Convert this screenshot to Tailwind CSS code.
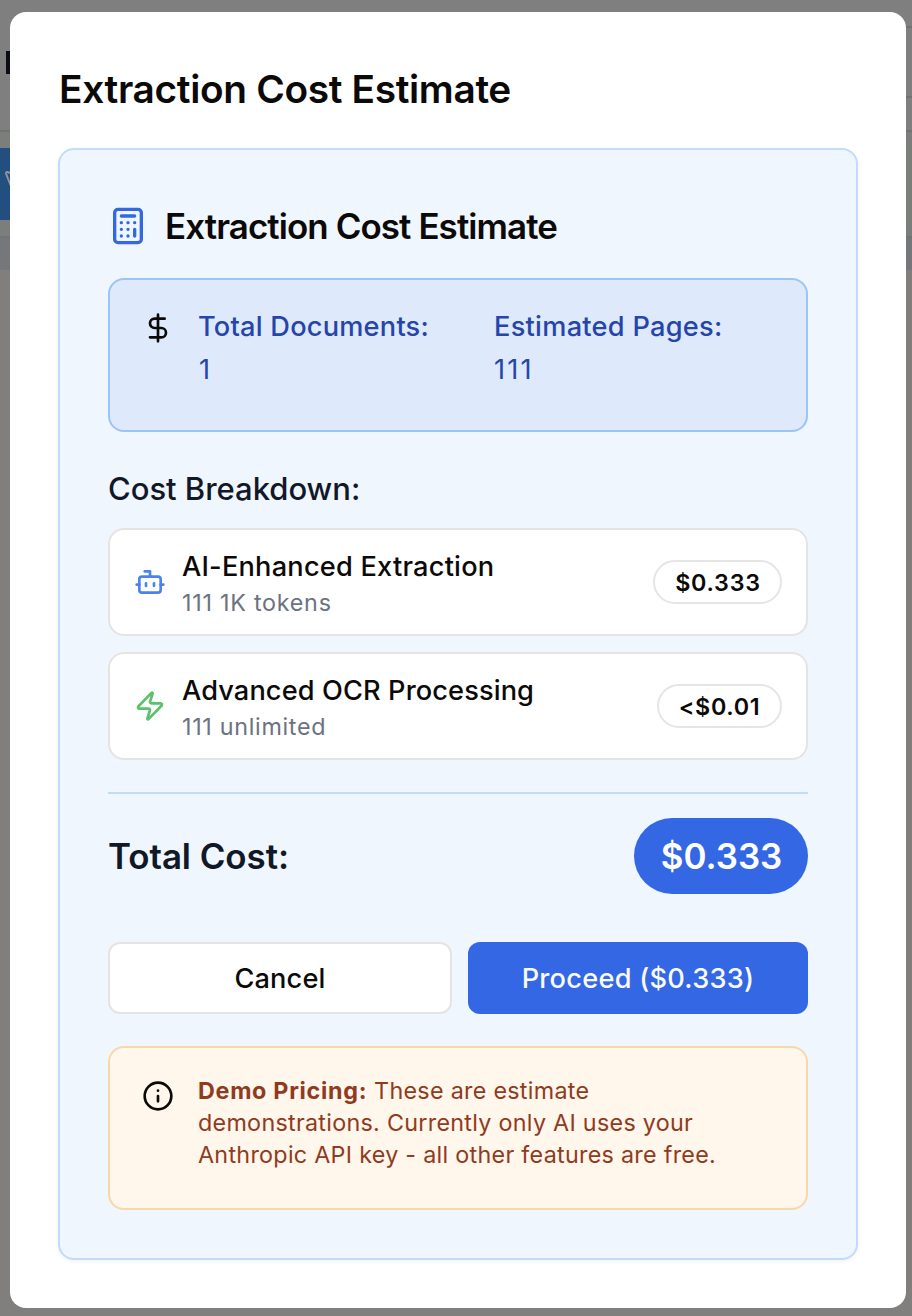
<!DOCTYPE html>
<html lang="en">
<head>
<meta charset="utf-8">
<title>Extraction Cost Estimate</title>
<script src="https://cdn.jsdelivr.net/npm/@tailwindcss/browser@4"></script>
</head>
<body class="relative h-[1316px] w-[912px] overflow-hidden bg-[#7f7f7f] font-['Inter',sans-serif] text-[#0c0a09]">

<!-- Page behind the dialog -->
<div class="flex h-full flex-col" aria-hidden="true">
  <div class="flex h-[132px] border-b-2 border-[#737272]">
    <div class="ml-[6px] mt-[51px] h-[23px] w-1 bg-[#0b0d15]"></div>
    <div class="ml-auto mt-[26px] h-[72px] w-[6px] border-y-2 border-[#737272]"></div>
  </div>
  <div class="h-[106px] border-b-2 border-[#727374] bg-[#7c7e7b] pt-4">
    <div class="h-[72px] w-20 bg-[#234f80] pl-[4px] pt-[22px]">
      <svg class="h-4 w-4" viewBox="0 0 16 16" fill="none" stroke="#929597" stroke-width="2" stroke-linejoin="round"><path d="M6.500 15 2 3.500Q1.700 2 3.500 2L6 3"/></svg>
    </div>
  </div>
  <div class="h-8 bg-[#76777a]"></div>
  <div class="grow bg-[#807f7e]"></div>
</div>

<!-- Dialog -->
<main class="absolute left-[10px] top-3 flex h-[1296px] w-[896px] flex-col rounded-[16px] bg-white p-12">
  <h1 class="h-[56px] pl-px text-[38.8px] font-semibold leading-[58px] tracking-[-0.33px] whitespace-nowrap">Extraction Cost Estimate</h1>

  <section class="mt-8 flex h-[1112px] flex-col rounded-[16px] border-2 border-[#c3dbfb] bg-[#eff6fe] px-12 pt-12 shadow-[0_2px_4px_rgba(0,0,0,0.05)]">
    <div class="flex h-14 items-center gap-4">
      <svg class="size-10 text-[#3367e3]" viewBox="0 0 24 24" fill="none" stroke="currentColor" stroke-width="2" stroke-linecap="round" stroke-linejoin="round"><rect width="16" height="20" x="4" y="2" rx="2"/><path d="M8 6h8M16 14v4M16 10h.01M12 10h.01M8 10h.01M12 14h.01M8 14h.01M12 18h.01M8 18h.01"/></svg>
      <h2 class="pl-px text-[34.9px] font-semibold leading-[56px] tracking-[-0.9px] whitespace-nowrap">Extraction Cost Estimate</h2>
    </div>

    <div class="mt-6 flex h-[154px] rounded-[16px] border-2 border-[#9bc4f9] bg-[#dee9fb] px-8 pt-[25px]">
      <svg class="mt-[7px] size-8 shrink-0" viewBox="0 0 24 24" fill="none" stroke="currentColor" stroke-width="2" stroke-linecap="round" stroke-linejoin="round"><path d="M12 2v20M17 5H9.500a3.500 3.500 0 0 0 0 7h5a3.500 3.500 0 0 1 0 7H6"/></svg>
      <div class="ml-6 grid flex-1 grid-cols-2 content-start gap-4 text-[27.2px] leading-[43px] text-[#2645ab]">
        <div><div class="font-medium tracking-[0.22px] whitespace-nowrap">Total Documents:</div><div class="pl-px">1</div></div>
        <div><div class="font-medium tracking-[0.27px] whitespace-nowrap">Estimated Pages:</div><div class="tracking-[2.2px]">111</div></div>
      </div>
    </div>

    <h3 class="mt-8 h-12 text-[31px] font-medium leading-[50px] tracking-[-0.02px] text-[#111827]">Cost Breakdown:</h3>

    <div class="mt-4 flex flex-col gap-4">
      <div class="flex h-[108px] items-center rounded-[16px] border-2 border-[#e6e4e3] bg-white px-6">
        <svg class="size-8 text-[#4a83f0]" viewBox="0 0 24 24" fill="none" stroke="currentColor" stroke-width="2" stroke-linecap="round" stroke-linejoin="round"><path d="M12 8V4H8"/><rect width="16" height="12" x="4" y="8" rx="2"/><path d="M2 14h2M20 14h2M15 13v2M9 13v2"/></svg>
        <div class="ml-4 whitespace-nowrap pt-px">
          <div class="text-[27.2px] font-medium leading-10 tracking-[0.22px]">AI-Enhanced Extraction</div>
          <div class="text-[23.3px] leading-8 tracking-[0.75px] text-[#6b7280]">111 1K tokens</div>
        </div>
        <div class="ml-auto flex h-11 w-[129px] items-center justify-center rounded-full border-2 border-[#e5e5e5] pl-px pt-0.5 text-[23.3px] font-semibold tracking-[0.75px]">$0.333</div>
      </div>
      <div class="flex h-[108px] items-center rounded-[16px] border-2 border-[#e6e4e3] bg-white px-6">
        <svg class="size-8 text-[#5bc16b]" viewBox="0 0 24 24" fill="none" stroke="currentColor" stroke-width="2" stroke-linecap="round" stroke-linejoin="round"><path d="M4 14a1 1 0 0 1-.78-1.630l9.900-10.200a.5.5 0 0 1 .86.46l-1.920 6.020A1 1 0 0 0 13 10h7a1 1 0 0 1 .78 1.630l-9.900 10.200a.5.5 0 0 1-.86-.46l1.920-6.020A1 1 0 0 0 11 14z"/></svg>
        <div class="ml-4 whitespace-nowrap pt-px">
          <div class="text-[27.2px] font-medium leading-10 tracking-[0.11px]">Advanced OCR Processing</div>
          <div class="text-[23.3px] leading-8 tracking-[0.7px] text-[#6b7280]">111 unlimited</div>
        </div>
        <div class="ml-auto flex h-11 w-[125px] items-center justify-center rounded-full border-2 border-[#e5e5e5] pt-0.5 text-[23.3px] font-semibold tracking-[0.65px]">&lt;$0.01</div>
      </div>
    </div>

    <div class="mt-8 h-0.5 shrink-0 bg-[#c3dbfb]"></div>

    <div class="mt-6 flex h-[76px] items-center justify-between">
      <div class="text-[34.9px] font-semibold tracking-[-0.05px] text-[#111827]">Total Cost:</div>
      <div class="flex h-[76px] w-[174px] items-center justify-center rounded-full bg-[#3367e3] pl-px text-[34.9px] font-semibold text-white">$0.333</div>
    </div>

    <div class="mt-12 flex h-[72px] gap-4 text-[27.2px] font-medium">
      <button class="w-[344px] rounded-[12px] border-2 border-[#e6e4e3] bg-white pt-0.5 tracking-[0.15px]">Cancel</button>
      <button class="w-[340px] rounded-[12px] bg-[#3367e3] pt-0.5 tracking-[0.25px] text-[#f8fafc]">Proceed ($0.333)</button>
    </div>

    <div class="mt-8 flex h-[164px] rounded-[16px] border-2 border-[#f8d8a8] bg-[#fff6ec] px-8 pt-[27px]">
      <svg class="mt-[5px] size-8 shrink-0" viewBox="0 0 24 24" fill="none" stroke="currentColor" stroke-width="2" stroke-linecap="round" stroke-linejoin="round"><circle cx="12" cy="12" r="10"/><path d="M12 16v-4M12 8h.01"/></svg>
      <p class="ml-6 text-[23.3px] leading-8 tracking-[0.29px] text-[#8f3b20] whitespace-nowrap"><strong class="font-bold tracking-[0.72px]">Demo Pricing:</strong> These are estimate<br>demonstrations. Currently only AI uses your<br>Anthropic API key - all other features are free.</p>
    </div>
  </section>
</main>
</body>
</html>
